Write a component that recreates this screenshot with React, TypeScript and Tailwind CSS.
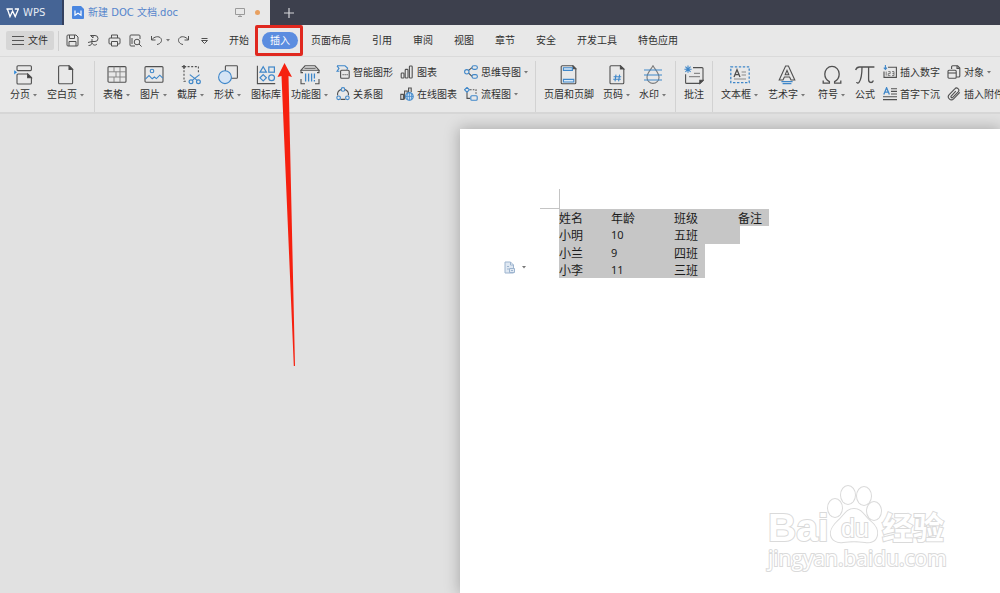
import type { ReactNode } from "react";

interface propsIcon {
  children: ReactNode;
}

interface propsTool {
  label: string;
  icon: ReactNode;
  menu?: boolean;
}

// 20px ribbon icon
const Big = ({ children }: propsIcon) => (
  <svg viewBox="0 0 20 20" className="size-5 shrink-0" fill="none" stroke="#505050" strokeWidth="1.1" aria-hidden="true">
    {children}
  </svg>
);

// 14px icon for the two-line groups
const Small = ({ children }: propsIcon) => (
  <svg viewBox="0 0 14 14" className="size-3.5 shrink-0" fill="none" stroke="#505050" strokeWidth="1.1" aria-hidden="true">
    {children}
  </svg>
);

const Quick = ({ label, children }: propsIcon & { label: string }) => (
  <button type="button" aria-label={label} className="shrink-0">
    <svg viewBox="0 0 13 13" className="size-[13px]" fill="none" stroke="#505050" strokeWidth="1" aria-hidden="true">
      {children}
    </svg>
  </button>
);

const blue = "#3f87c9";

const Caret = () => (
  <svg viewBox="0 0 4 3" className="h-[3px] w-1 shrink-0" fill="#777" aria-hidden="true">
    <path d="M0 0h4L2 2.6z" />
  </svg>
);

const BigTool = ({ label, icon, menu }: propsTool) => (
  <button type="button" className="flex shrink-0 flex-col items-center gap-1">
    {icon}
    <span className="flex items-center gap-[3px] leading-3 whitespace-nowrap">
      {label}
      {menu && <Caret />}
    </span>
  </button>
);

const SmallTool = ({ label, icon, menu }: propsTool) => (
  <button type="button" className="flex h-3.5 shrink-0 items-center gap-[3px] whitespace-nowrap">
    {icon}
    {label}
    {menu && <Caret />}
  </button>
);

const Divider = () => <span className="-mt-1 h-[51px] w-px shrink-0 bg-[#d2d2d2]" />;

const icons = {
  pageBreak: (
    <Big>
      <rect x="3" y=".8" width="14.4" height="4.8" rx="1" />
      <path d="M3 18V10a1 1 0 0 1 1-1h9.8l3.6 3.4V18a1 1 0 0 1-1 1H4a1 1 0 0 1-1-1" />
      <path d="M13.6 9v3.6h3.8z" fill="#333" />
      <path d="M.2 5.2v4.2L3 7.3z" fill="#2a86d8" stroke="none" />
    </Big>
  ),
  blankPage: (
    <Big>
      <path d="M3.6.8h9.6l3.4 3.4v13.6a1 1 0 0 1-1 1h-12a1 1 0 0 1-1-1v-16a1 1 0 0 1 1-1z" />
      <path d="M13 1v3.4h3.4z" fill="#333" />
    </Big>
  ),
  table: (
    <Big>
      <rect x="1" y="1.6" width="18" height="15.6" rx="1" />
      <path d="M1 6.8h18M1 12h18M7 1.6v5.2M13 1.6v5.2M9 6.8V12M7 12v5.2M13 6.8v10.4" stroke="#808080" strokeWidth=".9" />
    </Big>
  ),
  picture: (
    <Big>
      <rect x="1" y="1.6" width="18" height="15.6" rx="1" />
      <g stroke={blue}>
        <circle cx="8" cy="6" r="1.8" />
        <path d="M1.4 14.2 5 10.6l3.2 3.2 2.2-1.8 2 1.6 3.4-3.4 3 3" />
      </g>
    </Big>
  ),
  screenshot: (
    <Big>
      <path d="M3 1.6h14.4M3 1.6v14.6h3M17.4 1.6V8" strokeDasharray="2 1.6" />
      <path d="M.8 1.6h4.4M3-.4v4.2" strokeWidth="1.4" />
      <g stroke={blue} strokeWidth="1.2">
        <circle cx="10" cy="16.8" r="1.9" />
        <circle cx="17.4" cy="16.8" r="1.9" />
        <path d="m8.8 9.6 7.4 5.8M18.6 9.6l-7.4 5.8" />
      </g>
    </Big>
  ),
  shapes: (
    <Big>
      <rect x="7.4" y=".8" width="12" height="12.4" rx=".8" />
      <circle cx="7" cy="12.2" r="6.4" stroke={blue} fill="#d5e4f5" />
    </Big>
  ),
  iconLibrary: (
    <Big>
      <path d="M1.4.8v17.8h17.8" />
      <g stroke={blue} strokeWidth="1.2">
        <path d="M7.2 1.8 10.4 7.2H4z" />
        <rect x="12.8" y="2" width="5.6" height="5.2" />
        <path d="m7.2 9.6 3.2 3.2-3.2 3.2L4 12.8z" />
        <circle cx="15.6" cy="12.8" r="2.9" />
      </g>
    </Big>
  ),
  featureChart: (
    <Big>
      <path d="M5 .8h10l4 4.4H1zM4.4 3.2h11.2M1 5.2v2.4h2M19 5.2v2.4h-2M1 14v4.8h4M19 14v4.8h-4" />
      <path d="M5.6 8.6v8M8.6 8.6v8M11.6 8.6v8M14.4 8.6v5M14.4 15v1.6" stroke={blue} strokeWidth="1.3" />
    </Big>
  ),
  headerFooter: (
    <Big>
      <path d="M3.2.8h10.4l3.2 3v14a1 1 0 0 1-1 1H3.2a1 1 0 0 1-1-1v-16a1 1 0 0 1 1-1z" />
      <path d="M14 .8v3h2.8z" fill="#333" />
      <path d="M4.4 2.8h9v2.6h-9zM4.4 14.4h10.4V17H4.4z" stroke={blue} fill="#dcebf8" />
    </Big>
  ),
  pageNumber: (
    <Big>
      <path d="M4 .8h9.4l3.4 3.2v13.8a1 1 0 0 1-1 1H4a1 1 0 0 1-1-1v-16a1 1 0 0 1 1-1z" />
      <path d="M13.4.8V4h3.4z" fill="#333" />
      <path d="M9 9.6 8 16.4M12.6 9.6l-1 6.8M6.6 11.8h7.6M6.2 14.2h7.6" stroke={blue} />
    </Big>
  ),
  watermark: (
    <Big>
      <path d="M10 .8c-2 3.8-6 7-6 11.6a6 6 0 0 0 12 0C16 7.8 12 4.6 10 .8z" stroke="#7a7a7a" />
      <path d="M1 5h18M1 10h18M1 15h18" stroke={blue} />
    </Big>
  ),
  comment: (
    <Big>
      <path d="M9 2.6h9a1 1 0 0 1 1 1v11.8l-3.2 3H2.6a1 1 0 0 1-1-1V9.2" />
      <path d="M15.8 18.4v-3H19z" fill="#333" />
      <path d="M10 8.4h6M5 11.6h11" stroke="#8a8a8a" />
      <path d="M4 .6v7.2M.4 4.2h7.2M1.4 1.6l5.2 5.2M6.6 1.6 1.4 6.8" stroke={blue} />
    </Big>
  ),
  textBox: (
    <Big>
      <rect x=".8" y="1.8" width="18.4" height="15.8" stroke={blue} strokeDasharray="2.4 1.6" strokeWidth="1.3" />
      <path d="M4 12 7 4.8 10 12M5 9.6h4" strokeWidth="1.3" />
      <path d="M11.6 7H16M11.6 10H16M4 14h12" stroke="#8a8a8a" />
    </Big>
  ),
  wordArt: (
    <Big>
      <path d="M8.6 1h2.8l6.4 14H14l-1.4-3H7.4L6 15H2.2zM10 5.4 8.2 9.8h3.6z" />
      <path d="M4.4 16.6h11.2M5.6 18.6h8.8" stroke={blue} strokeWidth="1.3" />
    </Big>
  ),
  symbol: (
    <Big>
      <path
        d="M1.2 15.4v2.8h6.2v-1.6C4.4 15 2.8 12.6 2.8 9a7.2 7.6 0 0 1 14.4 0c0 3.6-1.6 6-4.6 7.6v1.6h6.2v-2.8"
        strokeWidth="1.3"
      />
    </Big>
  ),
  formula: (
    <Big>
      <path
        d="M.6 5C1.4 2.8 2.4 2 4.600 2h14.8M7 2c0 7-.8 12.4-3 15.4-.8 1-2.2.8-2.4-.4M13.6 2v12.6c0 3.6 3.6 3.8 4.8.8"
        strokeWidth="1.3"
      />
    </Big>
  ),
  smartArt: (
    <Small>
      <path d="M1 .8h8l2.6 2.4-.8 1.6M1 .8l2 2.6-2 2.8h2.4" stroke={blue} />
      <rect x="4.6" y="5.2" width="8.6" height="8" rx="1" />
      <path d="M6.6 9.6h1M8.6 9.6h1M10.6 9.6h1" />
    </Small>
  ),
  relation: (
    <Small>
      <path d="M5 2.4a5.6 5.6 0 0 0-3.4 6M9 2.4a5.6 5.6 0 0 1 3.4 6M4.6 12.4h4.8" />
      <g stroke={blue}>
        <circle cx="7" cy="2.4" r="1.8" />
        <circle cx="2.6" cy="10.8" r="1.8" />
        <circle cx="11.4" cy="10.8" r="1.8" />
      </g>
    </Small>
  ),
  chart: (
    <Small>
      <rect x="1.2" y="8" width="2.8" height="5" rx=".8" />
      <rect x="5.2" y="4.4" width="2.8" height="8.6" rx=".8" />
      <rect x="9.4" y="1" width="2.8" height="12" rx=".8" />
    </Small>
  ),
  onlineChart: (
    <Small>
      <path d="M.8 7.4h2.6v5H.8zM4.6 12.4V4h2.6v2M8.6 5V1h2.6v4" />
      <circle cx="9.4" cy="9.4" r="3.8" stroke={blue} fill="#cfe2f5" />
      <path d="M5.6 9.4h7.6M9.4 5.6v7.6M7.6 6.2q-1.2 3.2 0 6.4M11.2 6.2q1.2 3.2 0 6.4" stroke={blue} strokeWidth=".8" />
    </Small>
  ),
  mindMap: (
    <Small>
      <path d="M4.6 5.4 8 2.6M4.6 8.2 8 11.4" />
      <g stroke={blue}>
        <circle cx="2.8" cy="6.8" r="2.2" />
        <rect x="8" y=".8" width="5.4" height="3.6" rx="1.8" />
        <rect x="8" y="9.6" width="5.4" height="3.6" rx="1.8" />
      </g>
    </Small>
  ),
  flowChart: (
    <Small>
      <path d="M6 2.8h6v5" strokeDasharray="1.6 1.2" />
      <path d="M3 5.2v6.2h3" />
      <g stroke={blue}>
        <path d="M3 .4 5.4 2.8 3 5.2.6 2.8z" />
        <rect x="6.8" y="8.8" width="6.4" height="4.4" rx="1" />
      </g>
    </Small>
  ),
  insertNumber: (
    <Small>
      <path d="M5 2.2h8.4v10.2H1V6.6" />
      <path d="M2.4 0v4M.8 2.6l1.6 1.8L4 2.6" stroke={blue} />
      <path d="M3.2 6.6v4M5.2 6.6h2v2h-2v2h2.2M9 6.6h2v4H9M9.4 8.6H11" strokeWidth=".7" />
    </Small>
  ),
  dropCap: (
    <Small>
      <path d="M.8 7.600 3.600.8l2.800 6.800M1.800 5.200h3.600" stroke={blue} strokeWidth="1.3" />
      <path d="M8 1.8h6M8 4.4h6M8 7h6M0 9.800h14M0 12.600h14" />
    </Small>
  ),
  object: (
    <Small>
      <path d="M4.6 4V1.8a1 1 0 0 1 1-1h5L12.8 3v8a1 1 0 0 1-1 1H9.4" />
      <path d="M10 .8v2.6h2.8" />
      <rect x="1" y="5.2" width="8.2" height="8" rx="1" />
      <path d="M1 8h8.2" />
    </Small>
  ),
  attachment: (
    <Small>
      <path d="M12.8 5.4 6.6 11.8a3 3 0 0 1-4.4-4.2l5.600-5.800a2.200 2.200 0 0 1 3.400 3L5.800 10.400a1 1 0 0 1-1.600-1.400l4.600-4.800" />
    </Small>
  ),
};

const tabs = ["页面布局", "引用", "审阅", "视图", "章节", "安全", "开发工具", "特色应用"];

// last = index of the last selected cell, end = how far its selection reaches
const rows = [
  { cells: ["姓名", "年龄", "班级", "备注"], last: 3, end: "w-[31px]", height: "h-[17px]" },
  { cells: ["小明", "10", "五班", ""], last: 2, end: "w-[66px]", height: "h-[18px]" },
  { cells: ["小兰", "9", "四班", ""], last: 2, end: "w-[31px]", height: "h-[17px]" },
  { cells: ["小李", "11", "三班", ""], last: 2, end: "w-[31px]", height: "h-[17px]" },
];

const TitleBar = () => (
  <header className="flex h-[25px] items-stretch bg-[#3d404d]">
    <button type="button" className="flex w-16 shrink-0 items-center gap-1 border-r-2 border-[#33405f] bg-[#456495] pl-1.5 text-[#e6ebf3]">
      <svg viewBox="0 0 13 10" className="h-2.5 w-[13px]" fill="none" stroke="#fff" strokeWidth="1.3" aria-hidden="true">
        <path d="M.4 1h6.4M1.4 1 4 8.6 6.6 3l2.6 5.600L12.400 1H8.800" />
      </svg>
      WPS
    </button>
    <div className="flex w-[206px] shrink-0 items-center bg-[#e8e8e8] pr-2.5 pl-2">
      <svg viewBox="0 0 12 13" className="mr-1 h-[13px] w-3 shrink-0" aria-hidden="true">
        <path d="M1 0h8l3 3v9a1 1 0 0 1-1 1H1a1 1 0 0 1-1-1V1a1 1 0 0 1 1-1z" fill="#4a86e0" />
        <path d="M3 4.600v4.600L6 7.200l3 2V4.600" fill="none" stroke="#fff" strokeWidth="1.2" />
      </svg>
      <span className="grow whitespace-nowrap text-[#5585cc]">新建 DOC 文档.doc</span>
      <svg viewBox="0 0 10 9" className="mr-2.5 h-[9px] w-2.5 shrink-0" fill="none" stroke="#9a9a9a" aria-hidden="true">
        <path d="M.5.5h9v6h-9zM5 6.500v2M3 8.500h4" />
      </svg>
      <span className="size-[5px] shrink-0 rounded-full bg-[#e8a060]" />
    </div>
    <button type="button" aria-label="新建标签" className="flex w-[38px] items-center justify-center">
      <svg viewBox="0 0 10 10" className="size-2.5" stroke="#d5d6da" strokeWidth="1.2" aria-hidden="true">
        <path d="M5 0v10M0 5h10" />
      </svg>
    </button>
  </header>
);

const MenuBar = () => (
  <nav className="flex h-8 items-center overflow-hidden border-b border-[#dadada] pl-1.5">
    <button type="button" className="flex h-[19px] w-12 shrink-0 items-center justify-center gap-1 rounded-xs bg-[#d6d6d6]">
      <svg viewBox="0 0 12 9" className="h-[9px] w-3" stroke="#555" aria-hidden="true">
        <path d="M0 .5h12M0 4.500h12M0 8.500h12" />
      </svg>
      文件
    </button>
    <span className="mx-1 h-5 w-px shrink-0 bg-[#cfcfcf]" />
    <div className="ml-[3px] flex shrink-0 items-center gap-2">
      <Quick label="保存">
        <path d="M2 1h8l2 2v8a1 1 0 0 1-1 1H2a1 1 0 0 1-1-1V2a1 1 0 0 1 1-1zM3.500 1v3.500h5V1M3 12V7.500h7V12" />
      </Quick>
      <Quick label="输出为PDF">
        <path d="M3.500 1.500H8a3 3 0 0 1 0 6H5M3.500 1.500 6 4M6 4V1.500M1 8.500l4-1V5M5 7.500c0 3-1 4-3.500 4M5 9c1 2 3 3 5 1" />
      </Quick>
      <Quick label="打印">
        <path d="M3.500 4V1h6v3M3.500 10H2a1 1 0 0 1-1-1V5a1 1 0 0 1 1-1h9a1 1 0 0 1 1 1v4a1 1 0 0 1-1 1H9.500M3.500 7.500h6V12h-6z" />
      </Quick>
      <Quick label="打印预览">
        <path d="M6 12H2a1 1 0 0 1-1-1V2a1 1 0 0 1 1-1h8a1 1 0 0 1 1 1v3" />
        <circle cx="8" cy="8" r="2.8" />
        <path d="m10 10 2.600 2.600M3 4v6" />
      </Quick>
      <Quick label="撤销">
        <path d="M1.500 2v4h4M1.500 6C4 2.500 9 1.500 11 4.500c1.500 2.500-.5 5.500-4 6" />
      </Quick>
    </div>
    <span className="mr-[7px] ml-[3px]">
      <Caret />
    </span>
    <div className="flex shrink-0 items-center gap-2">
      <Quick label="恢复">
        <path d="M11.500 2v4h-4M11.500 6C9 2.500 4 1.500 2 4.500.5 7 2.500 10 6 10.500" />
      </Quick>
      <Quick label="自定义快速访问工具栏">
        <path d="M3.500 4.500h6M3.500 6.500l3 3 3-3z" />
      </Quick>
    </div>
    <button type="button" className="ml-[18px] w-5 shrink-0">开始</button>
    <button type="button" className="mx-[13px] h-[17px] w-9 shrink-0 rounded-full bg-[#5b8de0] text-white">插入</button>
    <div className="flex gap-[21px]">
      {tabs.map((tab) => (
        <button type="button" key={tab} className="shrink-0 whitespace-nowrap">{tab}</button>
      ))}
    </div>
  </nav>
);

const Ribbon = () => (
  <section className="flex shrink-0 items-start overflow-hidden border-b-2 border-[#d6d6d6] pt-2 pl-2.5">
    <div className="mr-2 flex shrink-0 gap-2.5">
      <BigTool label="分页" icon={icons.pageBreak} menu />
      <BigTool label="空白页" icon={icons.blankPage} menu />
      <Divider />
    </div>
    <div className="mr-2 flex shrink-0 gap-2.5">
      <BigTool label="表格" icon={icons.table} menu />
      <BigTool label="图片" icon={icons.picture} menu />
      <BigTool label="截屏" icon={icons.screenshot} menu />
      <BigTool label="形状" icon={icons.shapes} menu />
      <BigTool label="图标库" icon={icons.iconLibrary} />
      <BigTool label="功能图" icon={icons.featureChart} menu />
    </div>
    <div className="flex shrink-0 gap-[7px]">
      <div className="flex flex-col gap-2">
        <SmallTool label="智能图形" icon={icons.smartArt} />
        <SmallTool label="关系图" icon={icons.relation} />
      </div>
      <div className="flex flex-col gap-2">
        <SmallTool label="图表" icon={icons.chart} />
        <SmallTool label="在线图表" icon={icons.onlineChart} />
      </div>
      <div className="flex flex-col gap-2">
        <SmallTool label="思维导图" icon={icons.mindMap} menu />
        <SmallTool label="流程图" icon={icons.flowChart} menu />
      </div>
      <Divider />
    </div>
    <div className="ml-2 flex shrink-0 gap-[9px]">
      <BigTool label="页眉和页脚" icon={icons.headerFooter} />
      <BigTool label="页码" icon={icons.pageNumber} menu />
      <BigTool label="水印" icon={icons.watermark} menu />
      <Divider />
    </div>
    <div className="mx-2 flex shrink-0 gap-2">
      <BigTool label="批注" icon={icons.comment} />
      <Divider />
    </div>
    <div className="flex shrink-0 gap-2.5">
      <BigTool label="文本框" icon={icons.textBox} menu />
      <BigTool label="艺术字" icon={icons.wordArt} menu />
    </div>
    <div className="mr-2 ml-[13px] flex shrink-0 gap-2.5">
      <BigTool label="符号" icon={icons.symbol} menu />
      <BigTool label="公式" icon={icons.formula} />
    </div>
    <div className="flex shrink-0 gap-[7px]">
      <div className="flex flex-col gap-2">
        <SmallTool label="插入数字" icon={icons.insertNumber} />
        <SmallTool label="首字下沉" icon={icons.dropCap} />
      </div>
      <div className="flex flex-col gap-2">
        <SmallTool label="对象" icon={icons.object} menu />
        <SmallTool label="插入附件" icon={icons.attachment} />
      </div>
    </div>
  </section>
);

const Watermark = () => (
  <svg
    viewBox="0 0 190 96"
    className="absolute right-[46px] bottom-[14px] h-24 w-[190px] [paint-order:stroke]"
    fill="#fff"
    stroke="#dadada"
    strokeWidth="2"
    aria-label="Baidu 经验"
  >
    <text x="4" y="58" className="font-['Liberation_Sans',sans-serif] text-[39px] font-bold">Bai</text>
    <ellipse cx="71" cy="25" rx="7" ry="9" />
    <ellipse cx="84" cy="12" rx="7" ry="9" />
    <ellipse cx="100" cy="13" rx="7" ry="9" />
    <ellipse cx="110" cy="28" rx="7" ry="9" />
    <path d="M90 26c8 0 10 7 16 12 6 5 8 9 7 14-1 6-6 8-12 7-8-1-14-1-22 0-6 1-11-2-12-7-1-5 2-9 7-14 6-5 8-12 16-12z" />
    <text x="77" y="54" className="font-['Liberation_Sans',sans-serif] text-[25px]">du</text>
    <text x="118" y="56" className="font-['Noto_Sans_CJK_SC',sans-serif] text-[31px] font-bold">经验</text>
    <text x="4" y="83" className="font-['Open_Sans',sans-serif] text-[21px]">jingyan.baidu.com</text>
  </svg>
);

const Document = () => (
  <main className="relative flex grow overflow-hidden bg-[#e1e1e1] pt-[15px] pl-[46%]">
    <article className="grow bg-white pt-[60px] shadow-[0_0_14px_1px_rgba(0,0,0,0.25)]">
      <div className="ml-20 size-5 border-r border-b border-[#c4c4c4]" />
      <div className="flex items-end">
        <button type="button" aria-label="粘贴选项" className="mr-[33px] mb-1 ml-11 flex w-[22px] shrink-0 items-center justify-between">
          <svg viewBox="0 0 12 13" className="h-[13px] w-3" fill="#dfe8f2" stroke="#9db4cf" aria-hidden="true">
            <path d="M1 1h5.500l3 3v8H1zM6.500 1v3h3M3 5.500h2M3 8h2" />
            <path d="M5.500 7.500h5v4h-5zM7 9.500h2" />
          </svg>
          <Caret />
        </button>
        <table className="w-[210px] shrink-0 table-fixed border-collapse font-['Noto_Sans_CJK_SC',sans-serif] text-[12px] leading-[17px] text-[#1c1c1c]">
          <colgroup>
            <col className="w-[52px]" />
            <col className="w-[63px]" />
            <col className="w-16" />
            <col className="w-[31px]" />
          </colgroup>
          <tbody>
            {rows.map((row) => (
              <tr key={row.cells[0]}>
                {row.cells.map((cell, i) => (
                  <td key={i} className="p-0">
                    {i <= row.last && (
                      <div className={`bg-[#c6c6c6] ${row.height} ${i === row.last ? row.end : "w-full"}`}>
                        {Number(cell) ? <span className="block font-['Noto_Sans',sans-serif] text-[11px]">{cell}</span> : cell}
                      </div>
                    )}
                  </td>
                ))}
              </tr>
            ))}
          </tbody>
        </table>
      </div>
    </article>
    <Watermark />
  </main>
);

const App = () => {
  return (
    <div className="relative flex h-screen flex-col overflow-hidden bg-[#e8e8e8] font-['DejaVu_Sans','Noto_Sans_CJK_SC',sans-serif] text-[10px] text-[#303030]">
      <TitleBar />
      <MenuBar />
      <Ribbon />
      <Document />
      {/* red frame and arrow pointing at the insert tab */}
      <div className="pointer-events-none absolute top-[25px] left-[255px] h-[31px] w-12 rounded-xs border-3 border-[#e0281f]" />
      <svg viewBox="0 0 16 304" className="pointer-events-none absolute top-[63px] left-[277px] h-[304px] w-4 overflow-visible" fill="#f6200f" aria-hidden="true">
        <path d="M7.500 0 15 14l-3.500-1L18 303h-1.200L4.500 13 .5 14z" />
      </svg>
    </div>
  );
};

export default App;
